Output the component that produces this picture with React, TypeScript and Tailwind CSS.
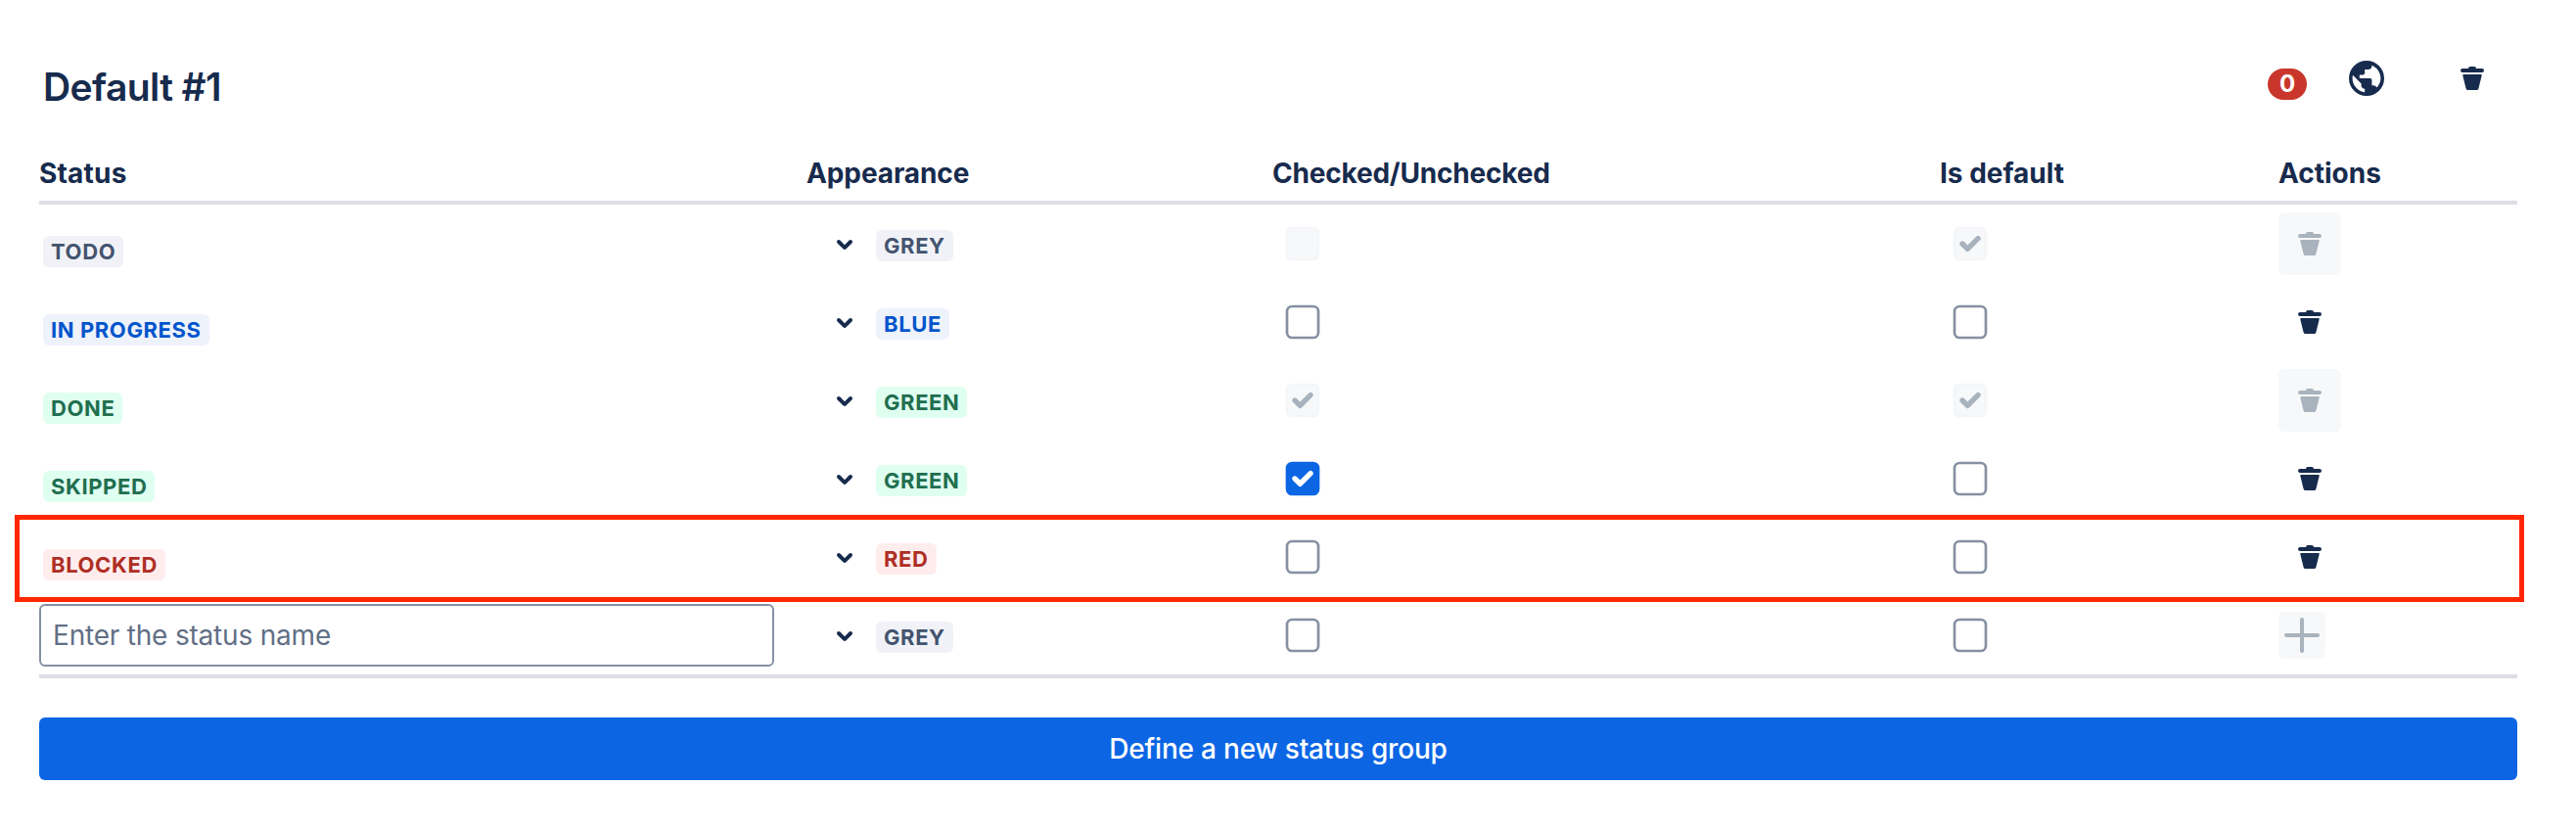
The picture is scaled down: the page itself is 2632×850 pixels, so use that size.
import React, { useState } from 'react';
import clsx from 'clsx';

type Appearance = 'grey' | 'blue' | 'green' | 'red';

interface Status {
  name: string;
  appearance: Appearance;
  checked: boolean;
  isDefault: boolean;
  checkedLocked?: boolean;
  defaultLocked?: boolean;
  highlighted?: boolean;
}

const initialStatuses: Status[] = [
  { name: 'Todo', appearance: 'grey', checked: false, isDefault: true, checkedLocked: true, defaultLocked: true },
  { name: 'In progress', appearance: 'blue', checked: false, isDefault: false },
  { name: 'Done', appearance: 'green', checked: true, isDefault: true, checkedLocked: true, defaultLocked: true },
  { name: 'Skipped', appearance: 'green', checked: true, isDefault: false },
  { name: 'Blocked', appearance: 'red', checked: false, isDefault: false, highlighted: true },
];

const lozengeColors: { [key in Appearance]: string } = {
  grey: 'bg-[#f1f2f7] text-[#44546f]',
  blue: 'bg-[#edf2fb] text-[#0055cc]',
  green: 'bg-[#dffff1] text-[#216e4e]',
  red: 'bg-[#ffeded] text-[#ae2e24]',
};

const rowGrid = 'grid grid-cols-[784px_476px_682px_346px_1fr]';

const Lozenge = ({ label, appearance }: { label: string; appearance: Appearance }) => (
  <span
    className={clsx(
      'inline-flex h-8 items-center rounded-md px-2 text-[22px] font-bold tracking-[0.6px] uppercase whitespace-nowrap',
      lozengeColors[appearance]
    )}
  >
    {label}
  </span>
);

const TrashIcon = () => (
  <svg viewBox="0 0 24 24" className="size-12" fill="currentColor">
    <path
      fillRule="evenodd"
      d="M7 7h10a1 1 0 010 2H7a1 1 0 010-2zm2.78 11a1 1 0 01-.97-.757L7.156 10.62A.5.5 0 017.64 10h8.72a.5.5 0 01.485.621l-1.656 6.622a1 1 0 01-.97.757H9.781zM11 6h2a1 1 0 011 1h-4a1 1 0 011-1z"
    />
  </svg>
);

const WorldIcon = () => (
  <svg viewBox="0 0 24 24" className="size-12" fill="currentColor">
    <path
      fillRule="evenodd"
      d="M12 21a9 9 0 100-18 9 9 0 000 18zm-.9-1.863A7.19 7.19 0 014.8 12c0-.558.072-1.089.189-1.611L9.3 14.7v.9c0 .99.81 1.8 1.8 1.8v1.737zm6.21-2.286A1.786 1.786 0 0015.6 15.6h-.9v-2.7c0-.495-.405-.9-.9-.9H8.4v-1.8h1.8c.495 0 .9-.405.9-.9V7.5h1.8c.99 0 1.8-.81 1.8-1.8v-.369c2.637 1.071 4.5 3.654 4.5 6.669a7.18 7.18 0 01-2.09 4.851z"
    />
  </svg>
);

const ChevronIcon = () => (
  <svg viewBox="0 0 24 24" className="size-12" fill="currentColor">
    <path d="M8.292 10.293a1.009 1.009 0 000 1.419l2.939 2.965c.218.215.5.322.779.322s.556-.107.769-.322l2.93-2.955a1.01 1.01 0 000-1.419.987.987 0 00-1.406 0l-2.298 2.317-2.307-2.327a.99.99 0 00-1.406 0z" />
  </svg>
);

interface CheckboxProps {
  checked: boolean;
  disabled?: boolean;
  label: string;
  onToggle?: () => void;
}

const Checkbox = ({ checked, disabled, label, onToggle }: CheckboxProps) => {
  let box = 'fill-white stroke-[#8590a2]';
  if (checked) box = 'fill-[#0c66e4] stroke-[#0c66e4]';
  if (disabled) box = 'fill-[#f7f8f9] stroke-[#f4f6f9]';

  return (
    <button
      type="button"
      role="checkbox"
      aria-checked={checked}
      aria-label={label}
      disabled={disabled}
      onClick={onToggle}
      className="-ml-px block size-16"
    >
      <svg viewBox="0 0 24 24" className="size-16">
        <rect x="6" y="6" width="12" height="12" rx="2" className={box} />
        {checked && (
          <path
            className={disabled ? 'fill-[#a9b3bd]' : 'fill-white'}
            d="M9.707 11.293a1 1 0 1 0-1.414 1.414l2 2a1 1 0 0 0 1.414 0l4-4a1 1 0 1 0-1.414-1.414L11 12.586l-1.293-1.293z"
          />
        )}
      </svg>
    </button>
  );
};

const AppearanceSelect = ({ appearance }: { appearance: Appearance }) => (
  <div className="flex items-center gap-2 pl-[15px]">
    <button type="button" aria-label="Change appearance">
      <ChevronIcon />
    </button>
    <div className="mt-1 flex">
      <Lozenge label={appearance} appearance={appearance} />
    </div>
  </div>
);

export default function App() {
  const [statuses, setStatuses] = useState<Status[]>(initialStatuses);
  const [newName, setNewName] = useState('');

  const toggle = (index: number, field: 'checked' | 'isDefault') => {
    setStatuses(statuses.map((s, i) => (i === index ? { ...s, [field]: !s[field] } : s)));
  };

  const remove = (index: number) => {
    setStatuses(statuses.filter((_, i) => i !== index));
  };

  return (
    <div className="h-[850px] w-[2632px] bg-white pl-10 pr-[60px] font-['Inter',sans-serif] text-[#172b4d]">
      <header className="flex h-[152px] justify-between">
        <h1 className="pl-1 pt-16 text-[39px] leading-[50px] font-semibold tracking-[-0.6px]">Default #1</h1>
        <div className="flex items-start pr-[22px] pt-14">
          <span className="mt-3.5 flex h-8 w-10 items-center justify-center rounded-full bg-[#c9372c] text-[24px] font-bold text-white">
            0
          </span>
          <button type="button" aria-label="Global" className="ml-[37px]">
            <WorldIcon />
          </button>
          <button type="button" aria-label="Delete group" className="ml-[60px]">
            <TrashIcon />
          </button>
        </div>
      </header>

      {/* Column titles */}
      <div className={clsx(rowGrid, 'h-[57px] border-b-4 border-[#dddee4] pt-2 text-[28px] leading-[34px] font-bold')}>
        <div className="tracking-[0.2px]">Status</div>
        <div className="tracking-[-0.1px]">Appearance</div>
        <div className="tracking-[-0.2px]">Checked/Unchecked</div>
        <div>Is default</div>
        <div>Actions</div>
      </div>

      {statuses.map((status, index) => (
        <div key={status.name} className={clsx(rowGrid, 'relative h-20 items-center')}>
          {status.highlighted && (
            <div className="pointer-events-none absolute -top-[3px] -left-[25px] h-[89px] w-[2564px] border-[5px] border-[#ff2600]" />
          )}
          <div className="flex pl-1 pt-4">
            <Lozenge label={status.name} appearance={status.appearance} />
          </div>
          <AppearanceSelect appearance={status.appearance} />
          <Checkbox
            label="Checked"
            checked={status.checked}
            disabled={status.checkedLocked}
            onToggle={() => toggle(index, 'checked')}
          />
          <Checkbox
            label="Is default"
            checked={status.isDefault}
            disabled={status.defaultLocked}
            onToggle={() => toggle(index, 'isDefault')}
          />
          <button
            type="button"
            aria-label="Delete status"
            disabled={status.defaultLocked}
            onClick={() => remove(index)}
            className="flex size-16 items-center justify-center rounded-md disabled:bg-[#f7f8f9] disabled:text-[#a9b3bd]"
          >
            <TrashIcon />
          </button>
        </div>
      ))}

      {/* New status row */}
      <div className={clsx(rowGrid, 'h-[84px] items-center border-b-4 border-[#dddee4]')}>
        <input
          value={newName}
          onChange={(e) => setNewName(e.target.value)}
          placeholder="Enter the status name"
          className="h-16 w-[751px] rounded-md border-2 border-[#8590a2] bg-white px-3 text-[28px] tracking-[-0.2px] placeholder:text-[#626f86]"
        />
        <AppearanceSelect appearance="grey" />
        <Checkbox label="Checked" checked={false} />
        <Checkbox label="Is default" checked={false} />
        <button
          type="button"
          aria-label="Add status"
          disabled={!newName}
          className="flex size-12 items-center justify-center rounded-md disabled:bg-[#f7f8f9] disabled:text-[#a9b3bd]"
        >
          <svg viewBox="0 0 48 48" className="size-12" stroke="currentColor" strokeWidth="4" strokeLinecap="round">
            <path d="M24 8v32M8 24h32" />
          </svg>
        </button>
      </div>

      <button
        type="button"
        className="mt-10 h-16 w-full rounded-md bg-[#0c66e4] text-[28px] font-medium tracking-[-0.2px] text-white"
      >
        Define a new status group
      </button>
    </div>
  );
}
